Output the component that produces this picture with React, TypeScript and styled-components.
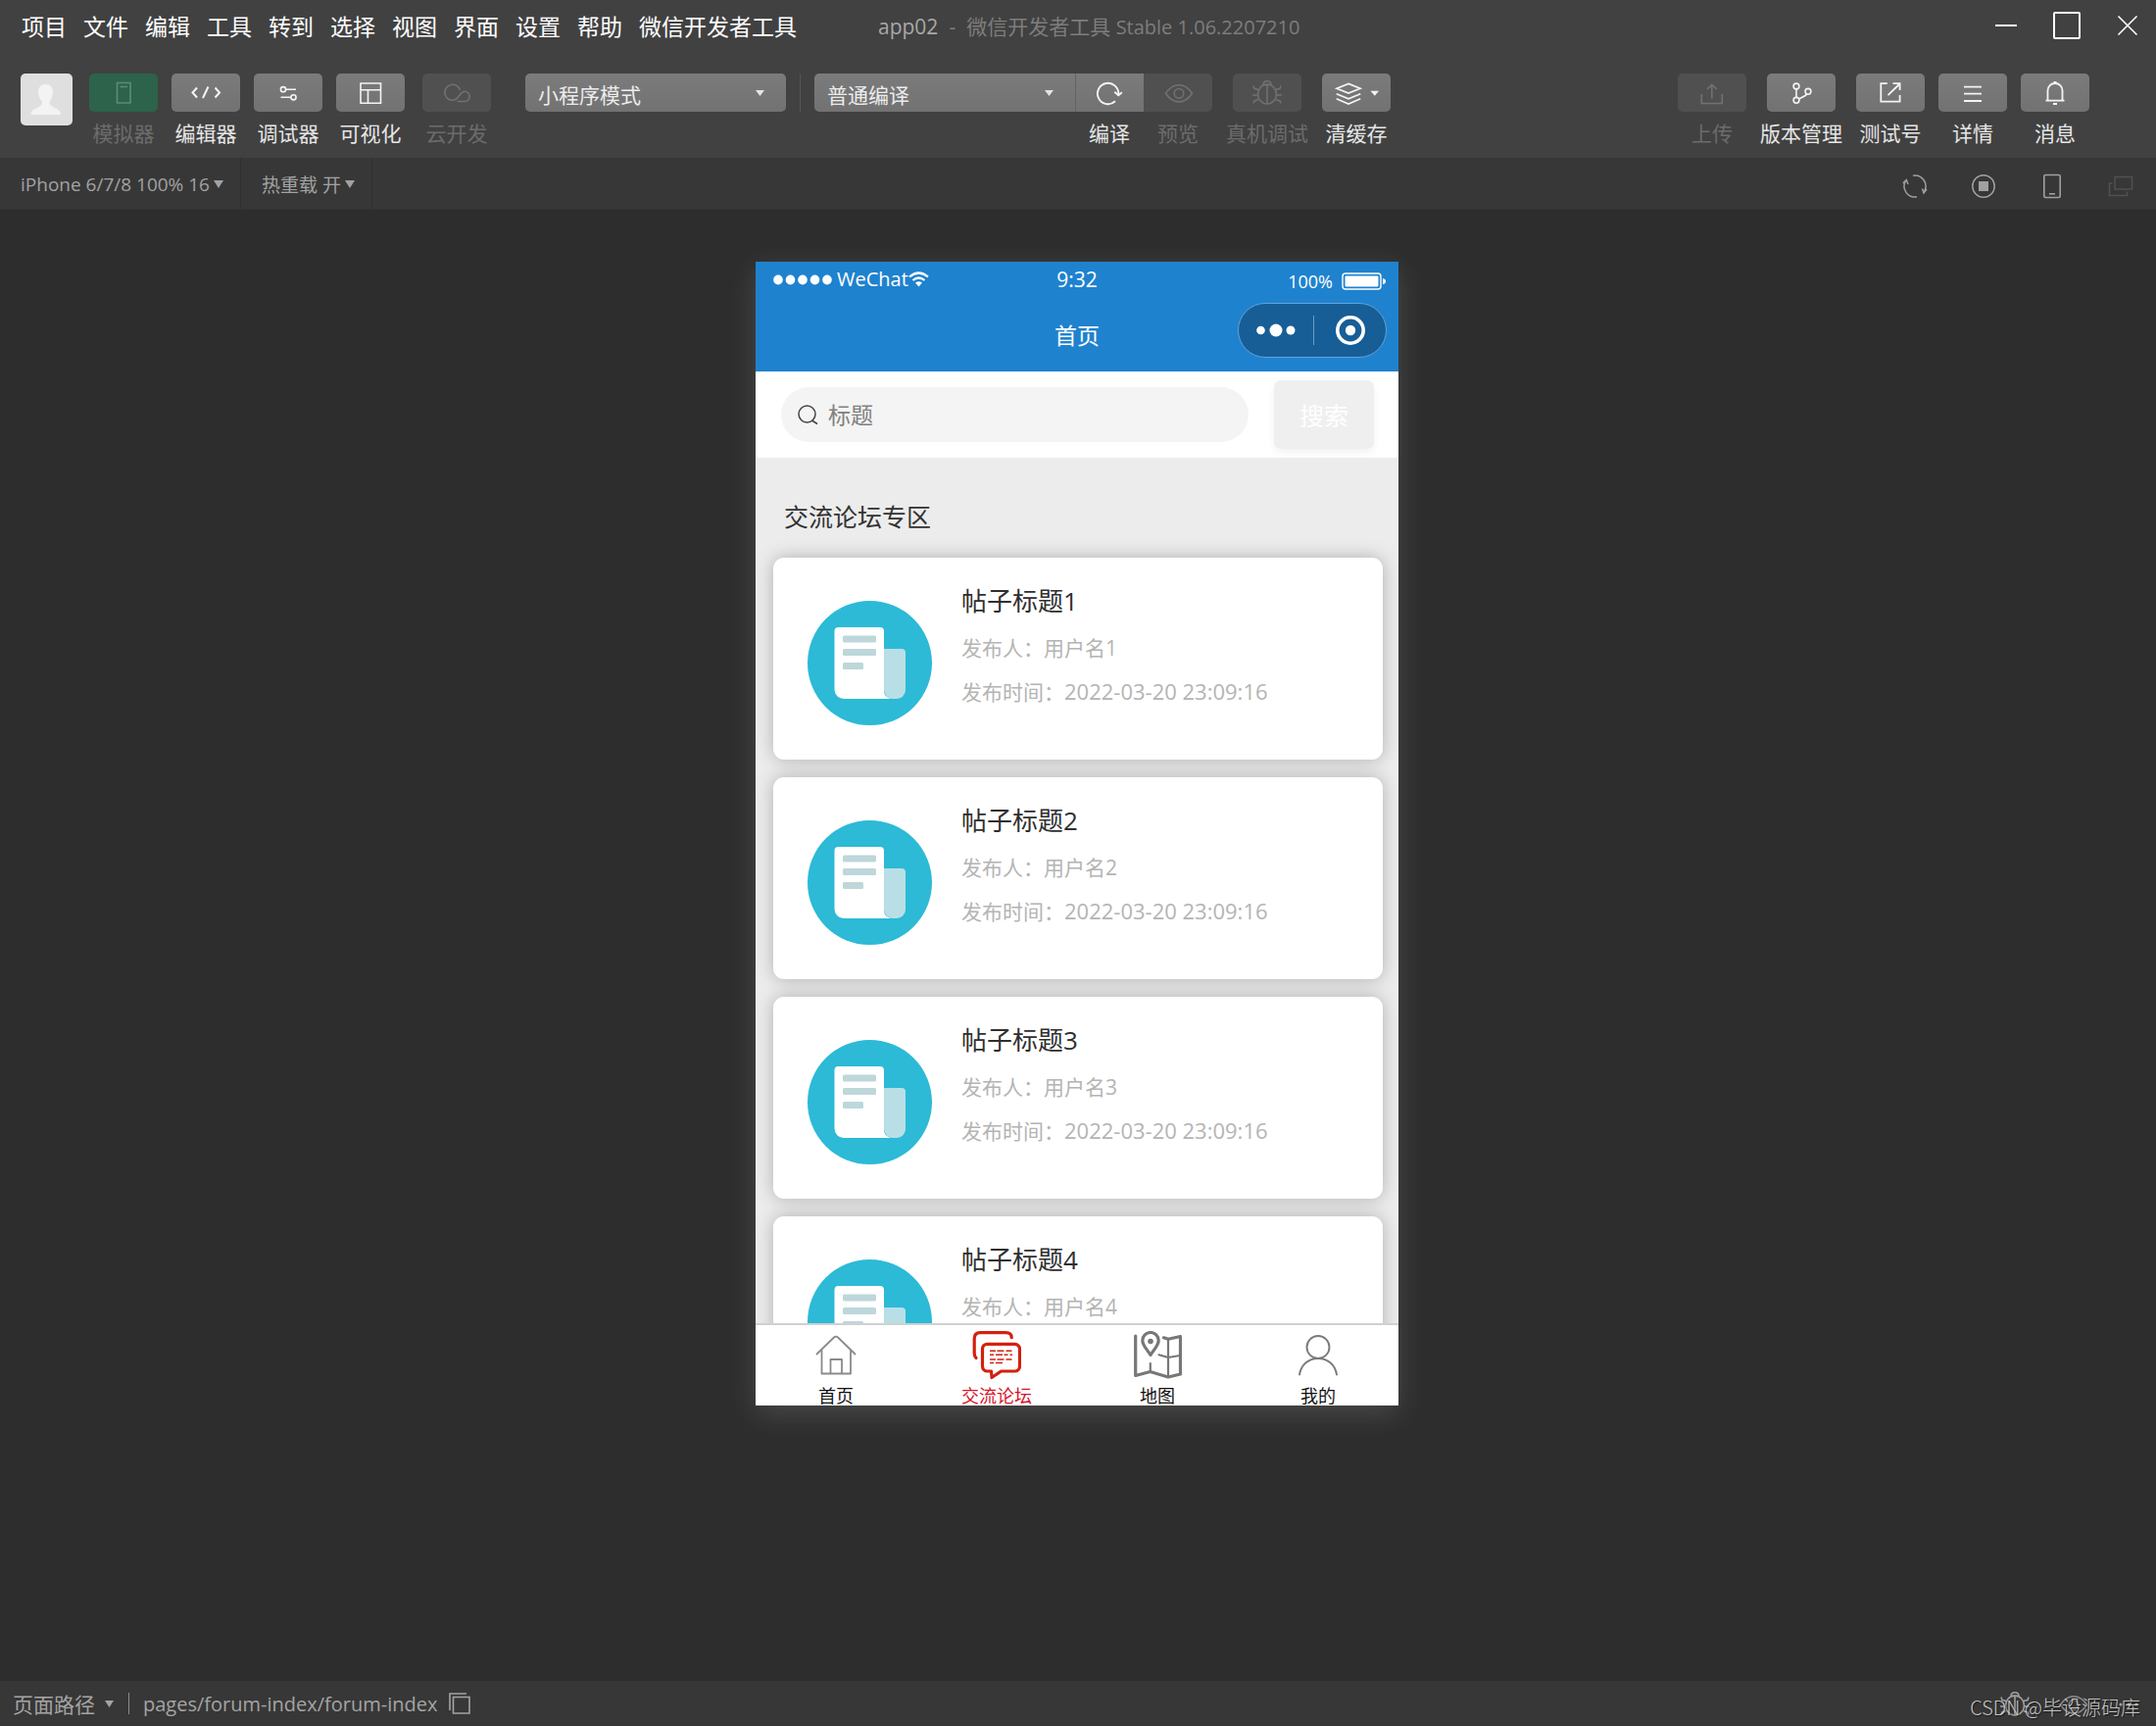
import React from "react";
import styled, { createGlobalStyle } from "styled-components";

const GlobalStyle = createGlobalStyle`
  *, *::before, *::after { box-sizing: border-box; }
  html, body { margin: 0; padding: 0; }
  body {
    background: #2d2d2d;
    font-family: "Open Sans", "Noto Sans CJK SC", sans-serif;
  }
  button, input, select {
    margin: 0;
    padding: 0;
    border: 0;
    background: none;
    color: inherit;
    font: inherit;
  }
`;

/* ---------- window shell ---------- */

const Window = styled.div`
  display: flex;
  flex-direction: column;
  min-height: 100vh;
  color: #e4e4e4;
`;

const TitleBar = styled.header`
  display: flex;
  align-items: center;
  height: 54px;
  padding: 0 18px 0 22px;
  background: #414141;
`;

const Menu = styled.nav`
  display: flex;
  gap: 17px;
`;

const MenuItem = styled.button`
  color: #ffffff;
  font-size: 23px;
  line-height: 34px;
  white-space: nowrap;
`;

const WindowTitle = styled.h1`
  display: flex;
  align-items: baseline;
  gap: 11px;
  margin: 0 auto 0 83px;
  color: #7d7d7d;
  font-size: 21px;
  font-weight: 400;
  line-height: 34px;
  white-space: nowrap;
`;

const ProjectName = styled.span`
  color: #a8a8a8;
`;

const Version = styled.span`
  font-size: 20px;
`;

const WindowControls = styled.div`
  display: flex;
  align-items: center;
  gap: 36px;
  padding-bottom: 2px;
`;

const IconButton = styled.button`
  display: flex;
  align-items: center;
  justify-content: center;
`;

/* ---------- toolbar ---------- */

const Toolbar = styled.div`
  display: flex;
  align-items: flex-start;
  gap: 14px;
  padding: 21px 68px 10px 21px;
  background: #414141;
`;

const Avatar = styled.div`
  display: flex;
  flex: none;
  width: 53px;
  height: 53px;
  margin-right: 3px;
  border-radius: 5px;
  background: #dfdfdf;
`;

type Tone = "normal" | "active" | "muted";

const toneFill: Record<Tone, string> = {
  normal: "linear-gradient(#7b7b7b, #727272)",
  active: "#2c634a",
  muted: "#505050",
};

const Tool = styled.button<{ $tone: Tone; $indent?: boolean }>`
  display: flex;
  flex: none;
  flex-direction: column;
  align-items: center;
  gap: 7px;
  min-width: 70px;
  margin-left: ${(p) => (p.$indent ? "4px" : "0")};
  color: ${(p) => (p.$tone === "normal" ? "#e6e6e6" : "#6c6c6c")};
`;

const ToolFace = styled.span<{ $tone: Tone; $corners?: string }>`
  display: block;
  width: 70px;
  height: 39px;
  border-radius: ${(p) => p.$corners ?? "5px"};
  background: ${(p) => toneFill[p.$tone]};
  color: ${(p) =>
    p.$tone === "normal" ? "#f4f4f4" : p.$tone === "active" ? "#5f8b78" : "#717171"};
`;

const ToolLabel = styled.span`
  font-size: 21px;
  line-height: 30px;
  white-space: nowrap;
`;

const SelectShell = styled.div<{ $corners: string; $indent?: boolean }>`
  display: grid;
  align-items: center;
  flex: 0 1 266px;
  width: 266px;
  height: 39px;
  margin-left: ${(p) => (p.$indent ? "21px" : "0")};
  border-radius: ${(p) => p.$corners};
  background: ${toneFill.normal};

  > * {
    grid-area: 1 / 1;
  }

  > svg {
    justify-self: end;
    margin-right: 22px;
    pointer-events: none;
  }
`;

const Select = styled.select`
  width: 100%;
  height: 39px;
  padding: 4px 40px 0 13px;
  appearance: none;
  color: #ececec;
  font-size: 21px;
`;

const CompileGroup = styled.div`
  display: flex;
  align-items: flex-start;

  > button:nth-of-type(1) > span:first-child {
    border-left: 1px solid #646464;
  }
`;

const Divider = styled.span<{ $height: number; $color: string }>`
  flex: none;
  width: 1px;
  height: ${(p) => p.$height}px;
  background: ${(p) => p.$color};
`;

const ToolSet = styled.div`
  display: flex;
  gap: 14px;
  margin-left: auto;
`;

/* ---------- simulator bar ---------- */

const SimulatorBar = styled.div`
  display: flex;
  align-items: stretch;
  height: 53px;
  padding-right: 23px;
  border-bottom: 1px solid #333333;
  background: #373737;
  color: #a2a2a2;
`;

const DeviceMenu = styled.button`
  display: flex;
  align-items: center;
  gap: 4px;
  padding: 2px 17px 0 21px;
  border-right: 1px solid #303030;
  font-size: 19px;
  white-space: nowrap;
`;

const SimulatorActions = styled.div`
  display: flex;
  gap: 44px;
  margin-left: auto;
  padding-top: 5px;
`;

const Stage = styled.main`
  display: flex;
  flex: 1;
  align-items: flex-start;
  justify-content: center;
  padding: 53px 2px 53px 0;
`;

/* ---------- phone ---------- */

const Phone = styled.section`
  display: flex;
  flex-direction: column;
  width: 656px;
  height: 1167px;
  background: #ececec;
  box-shadow: 0 8px 28px rgba(255, 255, 255, 0.14);
`;

const PhoneHeader = styled.header`
  flex: none;
  background: #1f82ce;
  color: #ffffff;
`;

const StatusBar = styled.div`
  display: grid;
  grid-template-columns: 1fr auto 1fr;
  align-items: center;
  height: 36px;
  padding: 0 12px 3px;
  font-size: 21px;
  line-height: 32px;
`;

const Carrier = styled.div`
  display: flex;
  align-items: center;
  gap: 4px;
  padding-left: 6px;
  font-size: 20px;
`;

const CarrierName = styled.span`
  display: flex;
  align-items: center;
`;

const Battery = styled.div`
  display: flex;
  align-items: center;
  justify-content: flex-end;
  gap: 9px;
  padding-top: 4px;
  font-size: 18px;
`;

const NavBar = styled.div`
  display: grid;
  grid-template-columns: 1fr auto 1fr;
  align-items: center;
  height: 76px;
`;

const NavTitle = styled.h2`
  grid-column: 2;
  margin: 0;
  font-size: 23px;
  font-weight: 400;
`;

const Capsule = styled.div`
  display: flex;
  align-items: center;
  gap: 18px;
  justify-self: end;
  align-self: start;
  width: 152px;
  height: 56px;
  margin: 6px 12px 0 0;
  padding-left: 18px;
  border: 1px solid #5ea5dc;
  border-radius: 28px;
  background: #175e96;
`;

const SearchPanel = styled.form`
  display: flex;
  flex: none;
  align-items: center;
  gap: 26px;
  height: 88px;
  padding: 0 25px 0 26px;
  background: #ffffff;
`;

const SearchField = styled.label`
  display: flex;
  flex: 1;
  align-items: center;
  gap: 10px;
  height: 56px;
  padding: 0 17px;
  border-radius: 28px;
  background: #f4f4f4;
`;

const SearchInput = styled.input`
  flex: 1;
  min-width: 0;
  outline: none;
  color: #333333;
  font-size: 23px;

  &::placeholder {
    color: #808080;
    opacity: 1;
  }
`;

const SearchButton = styled.button`
  width: 102px;
  height: 70px;
  border-radius: 7px;
  background: #efefef;
  box-shadow: 0 4px 9px rgba(0, 0, 0, 0.05);
  color: #ffffff;
  font-size: 25px;
`;

const Feed = styled.div`
  flex: 1;
  min-height: 0;
  padding: 20px 16px 0 18px;
  overflow: hidden;
`;

const FeedTitle = styled.h3`
  margin: 0 0 2px;
  padding-left: 11px;
  color: #333333;
  font-size: 25px;
  font-weight: 400;
  line-height: 80px;
`;

const Posts = styled.div`
  display: flex;
  flex-direction: column;
  gap: 18px;
`;

const Card = styled.article`
  display: flex;
  align-items: flex-start;
  gap: 30px;
  padding: 24px 35px 35px;
  border-radius: 11px;
  background: #ffffff;
  box-shadow: 0 0 18px rgba(0, 0, 0, 0.26);

  > svg {
    flex: none;
    margin-top: 20px;
  }
`;

const PostTitle = styled.h4`
  margin: 0 0 6px;
  color: #2f2f2f;
  font-size: 26px;
  font-weight: 400;
  line-height: 40px;
`;

const PostMeta = styled.p`
  margin: 0;
  color: #b4b4b4;
  font-size: 21px;
  line-height: 44px;
  white-space: nowrap;
`;

const Stamp = styled.time`
  font-size: 22px;
`;

const TabBar = styled.nav`
  display: grid;
  flex: none;
  grid-template-columns: repeat(4, 1fr);
  position: relative;
  border-top: 2px solid #d0d0d0;
  background: #ffffff;
`;

const Tab = styled.a<{ $active?: boolean }>`
  display: flex;
  flex-direction: column;
  align-items: center;
  gap: 6px;
  padding-top: 6px;
  color: ${(p) => (p.$active ? "#d8142a" : "#111111")};
  font-size: 18px;
  line-height: 20px;
  text-decoration: none;
`;

/* ---------- footer ---------- */

const Footer = styled.footer`
  display: flex;
  position: relative;
  align-items: center;
  height: 46px;
  padding: 0 17px 0 13px;
  background: #373737;
  color: #a4a4a4;
  font-size: 21px;
`;

const PathMenu = styled.button`
  display: flex;
  align-items: center;
  gap: 10px;
  margin-right: 15px;
`;

const PagePath = styled.span`
  margin: 0 12px 0 14px;
  font-size: 20px;
`;

const FooterActions = styled.div`
  display: flex;
  align-items: center;
  gap: 31px;
  margin-left: auto;
  padding-top: 2px;
`;

const Watermark = styled.span`
  position: absolute;
  right: 16px;
  bottom: 4px;
  color: rgba(226, 226, 226, 0.85);
  font-family: "Noto Sans CJK SC", sans-serif;
  font-size: 20px;
  font-weight: 300;
  line-height: 30px;
  text-shadow: 1px 1px 1px rgba(0, 0, 0, 0.6);
`;

/* ---------- drawings ---------- */

const Caret = ({ width = 9, height = 6 }: { width?: number; height?: number }) => (
  <svg width={width} height={height} viewBox="0 0 10 6" fill="currentColor" preserveAspectRatio="none" aria-hidden="true">
    <path d="M0 0h10L5 6z" />
  </svg>
);

const FaceIcon = ({ children }: { children: React.ReactNode }) => (
  <svg
    width="70"
    height="39"
    viewBox="0 0 70 39"
    fill="none"
    stroke="currentColor"
    strokeWidth="1.6"
    aria-hidden="true"
  >
    {children}
  </svg>
);

const bugShape = (
  <>
    <ellipse cx="35" cy="21" rx="9.5" ry="10" />
    <path d="M31 11.5c0-5 8-5 8 0M31 11.5h8M35 12v19" />
    <path d="M21 12.5l1 3 4.500 1M20 22h5.500M21 30.500l1-2.500 4.500-1.500M49 12.500l-1 3-4.500 1M50 22h-5.500M49 30.500l-1-2.500-4.500-1.500" />
  </>
);

const eyeShape = (
  <>
    <path d="M22.500 20.300C27 13.500 32 11.800 36 11.800s9 1.700 13.500 8.500C45 27.200 40 28.900 36 28.900s-9-1.700-13.500-8.600z" />
    <circle cx="36" cy="20.300" r="4.800" />
  </>
);

const faces: Record<string, React.ReactNode> = {
  simulator: <path d="M28.500 9.500h13.500v20.500h-13.500zM31.500 13.500h7.500" />,
  editor: <path d="M26 14.500l-4.500 5 4.500 5M44.500 14.500l4.500 5-4.500 5M37.500 13.500l-5.500 11.500" strokeWidth="2" />,
  debugger: (
    <>
      <circle cx="30" cy="16.200" r="2.600" />
      <circle cx="40.500" cy="24.300" r="2.600" />
      <path d="M32.600 16.200H43M27.500 24.300h10.400" />
    </>
  ),
  visual: <path d="M25 10h20.500v20.300H25zM25 16.800h20.500M32.500 16.800v13.500" />,
  cloud: (
    <path d="M38.500 17A8 8 0 1 0 31 27.300c3.200 0 4.800-2 6.500-4.500s2.800-4.600 5.500-4.600a5.100 5.100 0 0 1 0 10.300h-7.500" />
  ),
  compile: (
    <>
      <path d="M43.300 21.500A10.700 10.700 0 1 0 40 28.300" strokeWidth="1.900" />
      <path d="M39.300 18.700l4 3.600 3.500-3" strokeWidth="1.900" />
    </>
  ),
  preview: eyeShape,
  device: bugShape,
  cache: (
    <>
      <path
        d="M27 10.400l12 4.800-12 4.800-12-4.800zM14.700 20.700l12.300 5.200 12.300-5.200M14.700 25.800l12.300 5.200 12.300-5.200"
        strokeWidth="1.700"
      />
      <path d="M49.500 17.700h8.500l-4.200 5z" fill="currentColor" stroke="none" />
    </>
  ),
  upload: <path d="M24.300 21v9.500h21V21M34.800 25.500v-14M30 15.800l4.800-4.500 4.800 4.500" />,
  branch: (
    <>
      <circle cx="30" cy="13" r="2.900" />
      <circle cx="42" cy="18.300" r="2.900" />
      <circle cx="30" cy="27.300" r="2.900" />
      <path d="M30 16v8.300M32.600 26c3.500-2 7-3 8.200-5" />
    </>
  ),
  test: (
    <path d="M31.800 10.200h-6.500v18.400h19.300v-6.500M32.500 22.200l12-11.700M37.500 10.200h7.100v6.800" strokeWidth="1.800" />
  ),
  details: <path d="M26 13.700h18M26 20.700h18M26 28h18" strokeWidth="1.800" />,
  bell: (
    <path d="M25.500 27.700h19M27.500 27.700V17.500a7.500 7.500 0 0 1 15 0v10.200M33.500 9h3M33 31h4" strokeWidth="1.800" />
  ),
};

const NewsIcon = () => (
  <svg width="127" height="127" viewBox="0 0 127 127" aria-hidden="true">
    <circle cx="63.500" cy="63.500" r="63.500" fill="#2cbad6" />
    <path
      d="M31.500 27H74a4 4 0 0 1 4 4v61c0 4.500 3.500 7.500 9 8H37a9.500 9.500 0 0 1-9.500-9.500V31a4 4 0 0 1 4-4z"
      fill="#ffffff"
    />
    <path d="M78 49h18a4 4 0 0 1 4 4v38a9 9 0 0 1-9 9h-4a9 9 0 0 1-9-9z" fill="#b8dfe6" />
    <g fill="#bdd7da">
      <rect x="36" y="35.500" width="34" height="7" rx="1.500" />
      <rect x="36" y="49" width="34" height="7" rx="1.500" />
      <rect x="36" y="63" width="21" height="7" rx="1.500" />
    </g>
  </svg>
);

const TabIcon = ({
  color,
  width,
  children,
}: {
  color: string;
  width: number;
  children: React.ReactNode;
}) => (
  <svg
    width="50"
    height="50"
    viewBox="0 0 50 50"
    fill="none"
    stroke={color}
    strokeWidth={width}
    strokeLinecap="round"
    strokeLinejoin="round"
    aria-hidden="true"
  >
    {children}
  </svg>
);

const HomeIcon = () => (
  <TabIcon color="#8a8a8a" width={1.8}>
    <path d="M5.500 23.500L23 6.500q2-1.800 4 0l17.500 17M10.500 19.500v24h29.500v-24M19.500 43.500V29h11.500v14.500" />
  </TabIcon>
);

const ForumIcon = () => (
  <TabIcon color="#d4200f" width={3.2}>
    <path d="M4 27.500q-1.800-2-1.800-5V8q0-6.300 6-6.300h26q6 0 6 5" />
    <path d="M15 13.300h28.500a5 5 0 0 1 5 5V36a5 5 0 0 1-5 5H29.500L20 47.500l-.5-6.500H15.500a5 5 0 0 1-5-5V18.300a5 5 0 0 1 4.500-5z" />
    <path
      d="M18 20.300h23M18 29h23"
      strokeWidth="1.500"
      strokeLinecap="butt"
      strokeDasharray="6 1.500 7 2"
    />
    <path
      d="M18 24.300h23M18 32.600h13"
      strokeWidth="1.500"
      strokeLinecap="butt"
      strokeDasharray="4 2 7 1.500"
    />
  </TabIcon>
);

const MapIcon = () => (
  <TabIcon color="#777777" width={3.2}>
    <path d="M2.700 5v40.500l15-4L36 47l12.500-3V5.500L36 8.300l-4.500-1.500" />
    <path d="M36 8.500V46M17.800 33v7.500M26.500 24.300l9.500 2.700 12-2" strokeWidth="2.200" />
    <path d="M18 24.500C14 18 9.800 14.500 9.800 9.700a8.200 8.200 0 0 1 16.400 0C26.200 14.500 22 18 18 24.500z" fill="#ffffff" />
    <circle cx="18" cy="10.500" r="2.800" fill="#777777" stroke="none" />
  </TabIcon>
);

const MeIcon = () => (
  <TabIcon color="#7a7a7a" width={1.9}>
    <circle cx="25" cy="16.500" r="11.500" />
    <path d="M6 44.500c1.500-10 9-16.500 19-16.500s17.500 6.500 19 16.500" />
  </TabIcon>
);

/* ---------- data ---------- */

const menuItems = [
  "项目", "文件", "编辑", "工具", "转到", "选择", "视图", "界面", "设置", "帮助", "微信开发者工具",
];

interface ToolSpec {
  face: string;
  label: string;
  tone: Tone;
  indent?: boolean;
  corners?: string;
}

const panelTools: ToolSpec[] = [
  { face: "simulator", label: "模拟器", tone: "active" },
  { face: "editor", label: "编辑器", tone: "normal" },
  { face: "debugger", label: "调试器", tone: "normal" },
  { face: "visual", label: "可视化", tone: "normal" },
  { face: "cloud", label: "云开发", tone: "muted", indent: true },
];

const compileTools: ToolSpec[] = [
  { face: "compile", label: "编译", tone: "normal", corners: "0" },
  { face: "preview", label: "预览", tone: "muted", corners: "0 5px 5px 0" },
];

const deviceTools: ToolSpec[] = [
  { face: "device", label: "真机调试", tone: "muted" },
  { face: "cache", label: "清缓存", tone: "normal" },
];

const projectTools: ToolSpec[] = [
  { face: "upload", label: "上传", tone: "muted" },
  { face: "branch", label: "版本管理", tone: "normal" },
  { face: "test", label: "测试号", tone: "normal" },
  { face: "details", label: "详情", tone: "normal" },
  { face: "bell", label: "消息", tone: "normal" },
];

const posts = [1, 2, 3, 4].map((n) => ({
  title: `帖子标题${n}`,
  author: `用户名${n}`,
  time: "2022-03-20 23:09:16",
}));

const tabs = [
  { label: "首页", Icon: HomeIcon },
  { label: "交流论坛", Icon: ForumIcon, active: true },
  { label: "地图", Icon: MapIcon },
  { label: "我的", Icon: MeIcon },
];

const ToolButton = ({ face, label, tone, indent, corners }: ToolSpec) => (
  <Tool type="button" $tone={tone} $indent={indent}>
    <ToolFace $tone={tone} $corners={corners}>
      <FaceIcon>{faces[face]}</FaceIcon>
    </ToolFace>
    <ToolLabel>{label}</ToolLabel>
  </Tool>
);

const renderTools = (list: ToolSpec[]) => list.map((t) => <ToolButton key={t.face} {...t} />);

export default function App() {
  return (
    <Window>
      <GlobalStyle />
      <TitleBar>
        <Menu>
          {menuItems.map((m) => (
            <MenuItem key={m} type="button">{m}</MenuItem>
          ))}
        </Menu>
        <WindowTitle>
          <ProjectName>app02</ProjectName>
          <span>-</span>
          <span>
            微信开发者工具 <Version>Stable 1.06.2207210</Version>
          </span>
        </WindowTitle>
        <WindowControls>
          <IconButton type="button" aria-label="最小化">
            <svg width="22" height="22" viewBox="0 0 22 22" stroke="#ffffff" strokeWidth="2">
              <path d="M0 11h22" />
            </svg>
          </IconButton>
          <IconButton type="button" aria-label="最大化">
            <svg width="30" height="30" viewBox="0 0 30 30" fill="none" stroke="#ffffff" strokeWidth="2">
              <rect x="2" y="2" width="26" height="26" rx="1" />
            </svg>
          </IconButton>
          <IconButton type="button" aria-label="关闭">
            <svg width="22" height="22" viewBox="0 0 22 22" stroke="#ffffff" strokeWidth="1.600">
              <path d="M1.500 1.500l19 19M20.500 1.500l-19 19" />
            </svg>
          </IconButton>
        </WindowControls>
      </TitleBar>

      <Toolbar>
        <Avatar>
          <svg width="53" height="53" viewBox="0 0 53 53" fill="#f3f3f3" aria-hidden="true">
            <path d="M25.500 11c5 0 7.500 3.500 7.500 8s-1.500 7-3 9c-1 2.500-.5 4 2 5.500 4 2.500 9 3.500 9 8.500H10.500c0-5 5-6 9-8.500 2.500-1.500 3-3 2-5.500-1.500-2-3.500-4.500-3.500-9s2.500-8 7.500-8z" />
          </svg>
        </Avatar>
        {renderTools(panelTools)}
        <SelectShell $corners="5px" $indent>
          <Select aria-label="项目模式" defaultValue="小程序模式">
            <option>小程序模式</option>
          </Select>
          <Caret />
        </SelectShell>
        <Divider $height={39} $color="#555555" />
        <CompileGroup>
          <SelectShell $corners="5px 0 0 5px">
            <Select aria-label="编译模式" defaultValue="普通编译">
              <option>普通编译</option>
            </Select>
            <Caret />
          </SelectShell>
          {renderTools(compileTools)}
        </CompileGroup>
        {renderTools(deviceTools)}
        <ToolSet>{renderTools(projectTools)}</ToolSet>
      </Toolbar>

      <SimulatorBar>
        <DeviceMenu type="button">
          iPhone 6/7/8 100% 16 <Caret width={10} height={8} />
        </DeviceMenu>
        <DeviceMenu type="button">
          热重载 开 <Caret width={10} height={8} />
        </DeviceMenu>
        <SimulatorActions>
          <IconButton type="button" aria-label="刷新">
            <svg width="26" height="26" viewBox="0 0 26 26" fill="none" stroke="#a0a0a0" strokeWidth="1.500">
              <path d="M11 2.200a11 11 0 0 1 11.700 16M15 23.800A11 11 0 0 1 3.500 7.500" />
              <path d="M20.500 15.500l1.500 4.500 3-4M6 11L4.300 6.500l-3.500 3.500" />
            </svg>
          </IconButton>
          <IconButton type="button" aria-label="停止">
            <svg width="26" height="26" viewBox="0 0 26 26" fill="none" stroke="#a0a0a0" strokeWidth="1.500">
              <circle cx="13" cy="13" r="11.200" />
              <rect x="8" y="8" width="10" height="10" fill="#a0a0a0" stroke="none" />
            </svg>
          </IconButton>
          <IconButton type="button" aria-label="设备">
            <svg width="26" height="26" viewBox="0 0 26 26" fill="none" stroke="#a0a0a0" strokeWidth="1.600">
              <rect x="4.800" y="1.500" width="16.400" height="23" rx="1.500" />
              <path d="M10 20.800h6" />
            </svg>
          </IconButton>
          <IconButton type="button" aria-label="分离窗口">
            <svg width="26" height="26" viewBox="0 0 26 26" fill="none" stroke="#505050" strokeWidth="1.500">
              <path d="M7 3.500h17.500v12.500H7zM4.500 10H1.500v12.500h18V18.500" />
            </svg>
          </IconButton>
        </SimulatorActions>
      </SimulatorBar>

      <Stage>
        <Phone>
          <PhoneHeader>
            <StatusBar>
              <Carrier>
                <svg width="61" height="11" viewBox="0 0 61 11" fill="#ffffff" aria-hidden="true">
                  {[5, 17.500, 30, 42.500, 55].map((x) => (
                    <ellipse key={x} cx={x} cy="5.500" rx="4.800" ry="5" />
                  ))}
                </svg>
                <CarrierName>
                  WeChat
                  <svg width="21" height="16" viewBox="0 0 21 16" fill="none" stroke="#ffffff" strokeWidth="2.200" aria-hidden="true">
                    <path d="M1 5.500q9.500-8 19 0M4.500 9q6-5 12 0" />
                    <path d="M7 11.500q3.500-2.500 7 0L10.500 15.500z" fill="#ffffff" stroke="none" />
                  </svg>
                </CarrierName>
              </Carrier>
              <span>9:32</span>
              <Battery>
                100%
                <svg width="46" height="18" viewBox="0 0 46 18" aria-hidden="true">
                  <rect x="1" y="1" width="39" height="16" rx="3" fill="none" stroke="#ffffff" strokeWidth="1.400" />
                  <rect x="3.500" y="3.500" width="34" height="11" rx="1" fill="#ffffff" />
                  <path d="M42 6q3 .5 3 3t-3 3z" fill="#ffffff" />
                </svg>
              </Battery>
            </StatusBar>
            <NavBar>
              <NavTitle>首页</NavTitle>
              <Capsule>
                <IconButton type="button" aria-label="更多">
                  <svg width="40" height="16" viewBox="0 0 40 16" fill="#ffffff">
                    <circle cx="4.500" cy="8" r="4.300" />
                    <circle cx="20" cy="8" r="6.500" />
                    <circle cx="35" cy="8" r="4.500" />
                  </svg>
                </IconButton>
                <Divider $height={30} $color="#6f9fc4" />
                <IconButton type="button" aria-label="关闭小程序">
                  <svg width="38" height="32" viewBox="-3 0 38 32" fill="none" stroke="#ffffff" strokeWidth="3.600">
                    <circle cx="16" cy="16" r="13.200" />
                    <circle cx="16" cy="16" r="5.200" fill="#ffffff" stroke="none" />
                  </svg>
                </IconButton>
              </Capsule>
            </NavBar>
          </PhoneHeader>

          <SearchPanel onSubmit={(e) => e.preventDefault()}>
            <SearchField>
              <svg width="21" height="21" viewBox="0 0 21 21" fill="none" stroke="#444444" strokeWidth="1.500" aria-hidden="true">
                <circle cx="9.500" cy="9.500" r="8.500" />
                <path d="M14.500 16l5.500 3.500" />
              </svg>
              <SearchInput type="text" placeholder="标题" aria-label="标题" />
            </SearchField>
            <SearchButton type="submit">搜索</SearchButton>
          </SearchPanel>

          <Feed>
            <FeedTitle>交流论坛专区</FeedTitle>
            <Posts>
              {posts.map((post) => (
                <Card key={post.title}>
                  <NewsIcon />
                  <div>
                    <PostTitle>{post.title}</PostTitle>
                    <PostMeta>发布人：{post.author}</PostMeta>
                    <PostMeta>
                      发布时间：<Stamp>{post.time}</Stamp>
                    </PostMeta>
                  </div>
                </Card>
              ))}
            </Posts>
          </Feed>

          <TabBar>
            {tabs.map(({ label, Icon, active }) => (
              <Tab key={label} href="#" $active={active}>
                <Icon />
                {label}
              </Tab>
            ))}
          </TabBar>
        </Phone>
      </Stage>

      <Footer>
        <PathMenu type="button">
          页面路径 <Caret width={9} height={7} />
        </PathMenu>
        <Divider $height={22} $color="#8a8a8a" />
        <PagePath>pages/forum-index/forum-index</PagePath>
        <IconButton type="button" aria-label="复制路径">
          <svg width="22" height="22" viewBox="0 0 22 22" fill="none" stroke="#a4a4a4" strokeWidth="1.600">
            <path d="M1 18V1h17M4.500 4.500h16.500v16.500h-16.500z" />
          </svg>
        </IconButton>
        <FooterActions>
          <IconButton type="button" aria-label="调试">
            <svg width="30" height="28" viewBox="20 6 30 28" fill="none" stroke="#a0a0a0" strokeWidth="1.600">
              {bugShape}
            </svg>
          </IconButton>
          <IconButton type="button" aria-label="预览">
            <svg width="28" height="20" viewBox="22 10 28 20" fill="none" stroke="#8c8c8c" strokeWidth="1.500">
              {eyeShape}
            </svg>
          </IconButton>
          <IconButton type="button" aria-label="更多">
            <svg width="22" height="4" viewBox="0 0 22 4" fill="#a0a0a0">
              <circle cx="3" cy="2" r="1.600" />
              <circle cx="11" cy="2" r="1.600" />
              <circle cx="19" cy="2" r="1.600" />
            </svg>
          </IconButton>
        </FooterActions>
        <Watermark>CSDN @毕设源码库</Watermark>
      </Footer>
    </Window>
  );
}
